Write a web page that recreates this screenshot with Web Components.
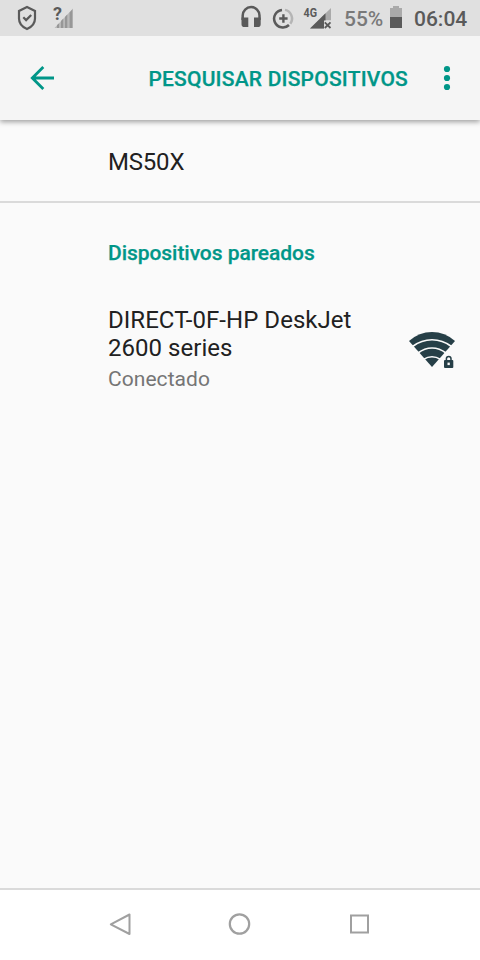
<!DOCTYPE html>
<html lang="pt-BR">
<head>
<meta charset="utf-8">
<title>Wi-Fi Direct</title>
<style>
html,body{margin:0;padding:0;width:480px;height:960px;overflow:hidden;background:#fafafa}
</style>
</head>
<body>
<wifi-screen></wifi-screen>
<script>
function define(name, html) {
  const t = document.createElement('template');
  t.innerHTML = html;
  customElements.define(name, class extends HTMLElement {
    constructor() {
      super();
      this.attachShadow({mode: 'open'}).appendChild(t.content.cloneNode(true));
    }
  });
}

define('status-bar', `
<style>
:host{display:flex;align-items:center;height:36px;background:#e0e0e0;color:#5a5a5a;box-sizing:border-box;padding:0 12px 0 15px;font-size:21px;font-weight:500;line-height:36px}
svg{display:block;flex:none}
.spacer{flex:1}
.signal{margin-left:12px}
.saver{margin-left:9px}
.cell{margin-left:6px}
.pct{width:40px;margin-left:12px;color:#797979;white-space:nowrap;padding-top:2px}
.batt{margin-left:6px}
.clock{width:54px;margin-left:12px;white-space:nowrap;padding-top:2px}
svg text{font-family:Roboto,"Liberation Sans",sans-serif;font-weight:700}
</style>
<svg width="24" height="36" viewBox="0 0 24 36" fill="none" stroke="#5a5a5a" stroke-width="2.200"><path d="M12 7l8 4v7.500c0 4.800-3.300 8.500-8 10.500-4.700-2-8-5.700-8-10.500V11z"/><path d="M8.300 17.300l2.800 2.800 5.100-5.200"/></svg>
<svg class="signal" width="24" height="36" viewBox="0 0 24 36"><path d="M3.500 28L22 8.500V28z" fill="#b9b9b9"/><path d="M6 28v-3l2-1.500V28zM10 28v-7l2.200-2.200V28zM14 28V17l2.300-2.500V28zM18.600 28V12.500L21.300 9.500V28z" fill="#979797"/><text x="2" y="20" font-size="18" fill="#5a5a5a" stroke="#e0e0e0" stroke-width="2" paint-order="stroke">?</text></svg>
<span class="spacer"></span>
<svg width="24" height="36" viewBox="0 0 24 36"><path d="M3.700 20v-4.500a8.400 8.400 0 0 1 16.800 0V20" fill="none" stroke="#5a5a5a" stroke-width="2.500"/><path d="M2.500 17.500H9.300V27H5.300a2.800 2.800 0 0 1-2.800-2.800zM15 17.500h6.700v6.700a2.800 2.800 0 0 1-2.800 2.800H15z" fill="#5a5a5a"/></svg>
<svg class="saver" width="24" height="36" viewBox="0 0 24 36" fill="none"><path d="M13 9.900A8.800 8.800 0 0 1 18.300 23.700" stroke="#b5b5b5" stroke-width="2.500"/><path d="M10 9.900A8.800 8.800 0 1 0 17 25" stroke="#5a5a5a" stroke-width="2.500"/><path d="M11.400 14.300v8.400M7.200 18.500h8.400" stroke="#5a5a5a" stroke-width="2.400"/></svg>
<svg class="cell" width="30" height="36" viewBox="0 0 30 36"><path d="M8 28.500L29 8v12.500h-6v8z" fill="#aaa"/><path d="M8 28.500L23.500 13.300V28.500z" fill="#5a5a5a"/><path d="M22 20.500h8V29h-8z" fill="#e0e0e0"/><path d="M22.800 22.300l5.700 5.700M28.500 22.300l-5.700 5.700" stroke="#5a5a5a" stroke-width="1.800"/><text x="1.500" y="17" font-size="12.500" textLength="13.500" lengthAdjust="spacingAndGlyphs" fill="#5a5a5a">4G</text></svg>
<span class="pct">55%</span>
<svg class="batt" width="12" height="36" viewBox="0 0 12 36"><path d="M3 6h6v2h3v9H0V8h3z" fill="#aaa"/><path d="M0 17h12v11H0z" fill="#5a5a5a"/></svg>
<span class="clock">06:04</span>`);

define('app-bar', `
<style>
:host{display:flex;align-items:center;height:84px;box-sizing:border-box;padding:0 15px 0 24px;background:#f5f5f5;color:#009688;box-shadow:0 2px 5px rgba(0,0,0,.36);clip-path:inset(0 0 -12px 0);position:relative}
svg{display:block}
.action{margin-left:auto;margin-right:21px;font-size:21px;font-weight:500;letter-spacing:.2px;-webkit-text-stroke:.25px #009688;white-space:nowrap;padding-top:2px}
</style>
<svg width="36" height="36" viewBox="0 0 36 36" fill="none" stroke="#009688" stroke-width="2.800"><path d="M30 18H8M19.300 7L8.300 18l11 11"/></svg>
<span class="action"><slot></slot></span>
<svg width="36" height="36" viewBox="0 0 36 36" fill="#009688"><circle cx="18" cy="9" r="3.100"/><circle cx="18" cy="18" r="3.100"/><circle cx="18" cy="27" r="3.100"/></svg>`);

define('this-device', `
<style>:host{display:flex;align-items:center;height:83px;box-sizing:border-box;padding:3px 24px 0 108px;border-bottom:2px solid #dadada;font-size:24px;letter-spacing:-.2px;color:#212121}</style><slot></slot>`);

define('section-title', `
<style>:host{display:block;padding:38px 24px 0 108px;font-size:21px;line-height:25px;font-weight:500;letter-spacing:-.05px;-webkit-text-stroke:.25px #009688;color:#009688}</style><slot></slot>`);

define('peer-row', `
<style>
:host{display:flex;align-items:center;padding:40px 24px 0 108px;justify-content:space-between}
.name{width:260px;font-size:24px;line-height:28px;color:#212121;letter-spacing:.04px}
.state{font-size:21px;line-height:25px;color:#757575;margin-top:5px;letter-spacing:.06px}
svg{display:block}
</style>
<div><div class="name"><slot></slot></div><div class="state"><slot name="state"></slot></div></div>
<svg width="48" height="48" viewBox="408 325 48 48"><path d="M432 367L409 341Q419 332 432 332T455 341z" fill="#263f47"/><g fill="none" stroke="#fafafa" stroke-width="1.600"><path d="M412.500 346.500Q421.500 339.800 432 339.800T451.500 346.500"/><path d="M418 353Q424.500 348 432 348T446 353"/><path d="M424 359.200Q427.500 356.700 432 356.700T440 359.200"/></g><path d="M446.400 361v-2.200a2.300 2.300 0 0 1 4.600 0v2.200" fill="none" stroke="#263f47" stroke-width="1.500"/><rect x="444" y="360" width="9.300" height="8" rx="1" fill="#263f47"/><rect x="447.500" y="362.600" width="2.300" height="2.500" fill="#fafafa"/></svg>`);

define('nav-bar', `
<style>
:host{display:flex;justify-content:center;gap:84px;align-items:center;height:72px;box-sizing:border-box;background:#fff;border-top:2px solid #dadada}
svg{display:block}
</style>
<svg width="36" height="36" viewBox="0 0 36 36" fill="none" stroke="#a0a0a0" stroke-width="2" stroke-linejoin="round"><path d="M27.500 7.500v19.500L8.800 17.300z"/></svg>
<svg width="36" height="36" viewBox="0 0 36 36" fill="none" stroke="#a0a0a0" stroke-width="2.200"><circle cx="17.500" cy="17" r="9.700"/></svg>
<svg width="36" height="36" viewBox="0 0 36 36" fill="none" stroke="#a0a0a0" stroke-width="2"><rect x="9" y="8.500" width="17" height="17"/></svg>`);

define('wifi-screen', `
<style>
:host{display:flex;flex-direction:column;width:480px;height:960px;background:#fafafa;font-family:Roboto,"Liberation Sans",sans-serif}
main{flex:1}
</style>
<status-bar></status-bar>
<app-bar>PESQUISAR DISPOSITIVOS</app-bar>
<main>
<this-device>MS50X</this-device>
<section-title>Dispositivos pareados</section-title>
<peer-row>DIRECT-0F-HP DeskJet 2600 series<span slot="state">Conectado</span></peer-row>
</main>
<nav-bar></nav-bar>`);
</script>
</body>
</html>
